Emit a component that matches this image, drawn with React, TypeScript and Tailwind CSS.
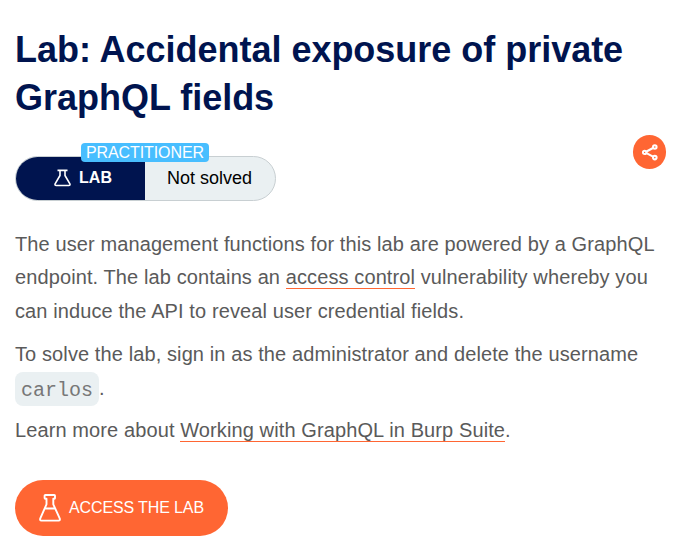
import React from "react";

function SmallFlask({ className }: { className: string }) {
  return (
    <svg className={className} viewBox="0 0 17 18" fill="none" stroke="currentColor" strokeWidth="1.6" strokeLinejoin="round">
      <path d="M3.5 1.4H13.5M6 1.4V6.5L1.1 14.9Q0.6 16.5 2.2 16.5H14.8Q16.4 16.5 15.9 14.9L11 6.5V1.4" />
    </svg>
  );
}

function LargeFlask({ className }: { className: string }) {
  return (
    <svg className={className} viewBox="0 0 22 28" fill="none" stroke="currentColor" strokeWidth="1.9" strokeLinejoin="round">
      <path d="M7.5 4.8H6.2Q5.6 4.8 5.6 4V1.8Q5.6 1 6.4 1H15.2Q16 1 16 1.8V4Q16 4.8 15.4 4.8H14.3V10.3L20.7 24.4Q21.4 26.6 19.6 26.6H2.4Q0.6 26.6 1.3 24.4L7.5 10.3ZM5.2 14.5H16.5" />
    </svg>
  );
}

export default function App() {
  return (
    <main className="h-[538px] w-[696px] overflow-hidden bg-white px-[15px] pt-[26px] font-['Liberation_Sans',Arial,sans-serif] text-[#5a5a5a]">
      <h1 className="text-[36px] leading-[48px] font-bold tracking-[-0.02px] text-[#00144f]">
        <span className="block whitespace-nowrap">Lab: Accidental exposure of private</span>
        <span className="block whitespace-nowrap">GraphQL fields</span>
      </h1>
      <div className="flex h-[80px] w-[651px] justify-between pt-[13px]">
        <div className="relative mt-[21px] flex h-[45px] w-[261px] rounded-full border border-[#c8cfd2] bg-[#eaf0f2] text-[18px] leading-[42px]">
          <div className="flex w-[129px] items-center rounded-l-full bg-[#00144f] pb-[2px] pl-[38px] font-bold text-white">
            <SmallFlask className="mr-[8px] h-[18px] w-[17px] shrink-0" />
            <span className="text-[16px] tracking-[0.1px]">LAB</span>
          </div>
          <span className="pl-[22px] text-black">Not solved</span>
          <span className="absolute -top-[14px] left-[65px] h-[19px] w-[128px] rounded-[4px] bg-[#48beff] px-[5px] text-[16px] leading-[19px] tracking-[-0.1px] text-white">PRACTITIONER</span>
        </div>
        <button className="flex h-[34px] w-[33px] items-center justify-center rounded-full bg-[#ff6633] text-white">
          <svg className="h-[17px] w-[16px]" viewBox="0 0 16 17" fill="none" stroke="currentColor" strokeWidth="2">
            <path d="M11 4L4.5 7.5M4.5 9.2L11 12.6" />
            <circle cx="12.8" cy="3" r="1.8" />
            <circle cx="2.6" cy="8.4" r="1.7" />
            <circle cx="12.8" cy="13.6" r="1.8" />
          </svg>
        </button>
      </div>
      <div className="mt-[25.75px] text-[20px] leading-[33.5px] tracking-[0.105px] whitespace-nowrap">
        <p>The user management functions for this lab are powered by a GraphQL<br />endpoint. The lab contains an <a className="border-b border-[#ff6633]">access control</a> vulnerability whereby you<br />can induce the API to reveal user credential fields.</p>
        <p className="mt-[9.25px]">To solve the lab, sign in as the administrator and delete the username<br /><span className="relative top-[1px]"><code className="rounded-[8px] bg-[#eaf0f2] px-[6px] pt-[6.5px] pb-[4.5px] font-['Liberation_Mono',monospace] text-[20px] tracking-normal text-[#777]">carlos</code>.</span></p>
        <p className="mt-[8px]">Learn more about <a className="border-b border-[#ff6633]">Working with GraphQL in Burp Suite</a>.</p>
      </div>
      <button className="mt-[33px] flex h-[56px] w-[213px] items-center rounded-full bg-[#ff6633] pl-[24px] text-[16px] tracking-[-0.12px] whitespace-nowrap text-white">
        <LargeFlask className="mr-[8px] h-[28px] w-[22px] shrink-0" />
        ACCESS THE LAB
      </button>
    </main>
  );
}
